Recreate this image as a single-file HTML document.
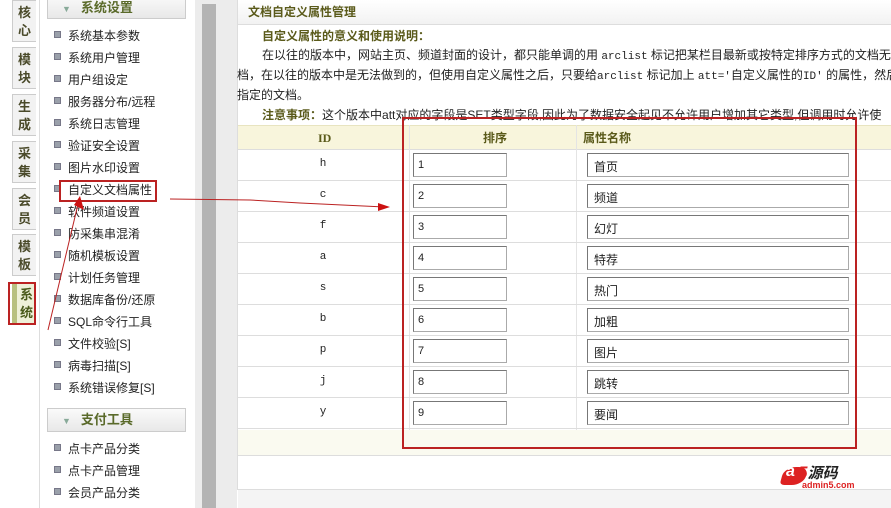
<!DOCTYPE html>
<html><head><meta charset="utf-8"><style>
*{margin:0;padding:0;box-sizing:border-box}
body{width:891px;height:508px;overflow:hidden;background:#fff;font-family:"Liberation Sans","Noto Sans CJK SC",sans-serif;font-size:12px;color:#222;position:relative}
.a{position:absolute}
.tab{position:absolute;left:12px;width:24px;height:42px;background:#f2f2f2;border:1px solid #ccc;border-right:none;color:#4a4a2a;font-weight:bold;font-size:13px;line-height:18px;text-align:center;padding-top:3px}
.it{position:absolute;left:54px;font-size:12px;color:#222;line-height:16px}
.it:before{content:"";display:inline-block;width:5px;height:5px;background:#9aa0aa;border:1px solid #778;margin-right:7px;vertical-align:2px}
.hd{position:absolute;left:47px;width:139px;height:24px;background:linear-gradient(#fafafa,#e8e8e8);border:1px solid #ccc;color:#5a6a2a;font-weight:bold;font-size:13px;line-height:22px;padding-left:14px}
.hd span{color:#8a9;font-size:9px;margin-right:10px}
.row{position:absolute;left:238px;width:653px;height:31px;border-bottom:1px solid #ddd}
.id{position:absolute;left:70px;width:30px;text-align:center;top:8px;font-family:"Liberation Mono",monospace;font-size:11px}
.in1{position:absolute;left:175px;top:3px;width:94px;height:24px;border:1px solid #aaa;border-top-color:#777;border-left-color:#777;padding:5px 4px;font-size:11px}
.in2{position:absolute;left:349px;top:3px;width:262px;height:24px;border:1px solid #aaa;border-top-color:#777;border-left-color:#777;padding:4px 6px;font-size:12px}
p.t{position:absolute;left:237px;font-size:12px;white-space:nowrap}
</style></head><body>
<div class="a" style="left:0;top:0;width:40px;height:508px;background:#fff;border-right:1px solid #ddd"></div>
<div class="tab" style="top:0">核<br>心</div>
<div class="tab" style="top:47px">模<br>块</div>
<div class="tab" style="top:94px">生<br>成</div>
<div class="tab" style="top:141px">采<br>集</div>
<div class="tab" style="top:188px">会<br>员</div>
<div class="tab" style="top:234px">模<br>板</div>
<div class="tab" style="top:282px;background:#eef0d8;border-left:5px solid #b8c080;color:#4a5a1a">系<br>统</div>
<div class="a" style="left:8px;top:282px;width:28px;height:43px;border:2px solid #b22"></div>
<div class="a" style="left:195px;top:0;width:42px;height:508px;background:#ececec"></div>
<div class="a" style="left:202px;top:4px;width:14px;height:504px;background:#b4b4b4"></div>
<div class="hd" style="top:-5px;height:24px;line-height:22px;padding-top:1px"><span>▼</span>系统设置</div>
<div class="it" style="top:28px">系统基本参数</div>
<div class="it" style="top:50px">系统用户管理</div>
<div class="it" style="top:72px">用户组设定</div>
<div class="it" style="top:94px">服务器分布/远程</div>
<div class="it" style="top:116px">系统日志管理</div>
<div class="it" style="top:138px">验证安全设置</div>
<div class="it" style="top:160px">图片水印设置</div>
<div class="it" style="top:182px">自定义文档属性</div>
<div class="a" style="left:59px;top:180px;width:98px;height:22px;border:2px solid #b22"></div>
<div class="it" style="top:204px">软件频道设置</div>
<div class="it" style="top:226px">防采集串混淆</div>
<div class="it" style="top:248px">随机模板设置</div>
<div class="it" style="top:270px">计划任务管理</div>
<div class="it" style="top:292px">数据库备份/还原</div>
<div class="it" style="top:314px">SQL命令行工具</div>
<div class="it" style="top:336px">文件校验[S]</div>
<div class="it" style="top:358px">病毒扫描[S]</div>
<div class="it" style="top:380px">系统错误修复[S]</div>
<div class="hd" style="top:408px"><span>▼</span>支付工具</div>
<div class="it" style="top:441px">点卡产品分类</div>
<div class="it" style="top:463px">点卡产品管理</div>
<div class="it" style="top:485px">会员产品分类</div>

<div class="a" style="left:237px;top:0;width:654px;height:25px;background:linear-gradient(#fff,#f2f2f2);border-bottom:1px solid #ddd;border-left:1px solid #ddd"></div>
<div class="a" style="left:237px;top:25px;width:1px;height:465px;background:#ddd"></div>
<div class="a" style="left:248px;top:3px;font-weight:bold;color:#5a5a1a;font-size:12px">文档自定义属性管理</div>
<p class="t" style="left:262px;top:27px;font-weight:bold;color:#5a5a1a">自定义属性的意义和使用说明：</p>
<p class="t" style="left:262px;top:46px">在以往的版本中，网站主页、频道封面的设计，都只能单调的用 <span style="font-family:'Liberation Mono';font-size:11px">arclist</span> 标记把某栏目最新或按特定排序方式的文档无</p>
<p class="t" style="top:66px">档，在以往的版本中是无法做到的，但使用自定义属性之后，只要给<span style="font-family:'Liberation Mono';font-size:11px">arclist</span> 标记加上 <span style="font-family:'Liberation Mono';font-size:11px">att='</span>自定义属性的<span style="font-family:'Liberation Mono';font-size:11px">ID'</span> 的属性，然后</p>
<p class="t" style="top:86px">指定的文档。</p>
<p class="t" style="left:262px;top:106px"><b style="color:#5a5a1a">注意事项：</b>这个版本中att对应的字段是SET类型字段,因此为了数据安全起见不允许用户增加其它类型,但调用时允许使</p>
<div class="a" style="left:238px;top:125px;width:653px;height:25px;background:#f8f5dc;border-bottom:1px solid #ddd;border-top:1px solid #e8e4c0"></div>
<div class="a" style="left:318px;top:131px;font-weight:bold;color:#5a5a1a;font-family:'Liberation Serif';font-size:12px">ID</div>
<div class="a" style="left:483px;top:129px;font-weight:bold;color:#5a5a1a">排序</div>
<div class="a" style="left:583px;top:129px;font-weight:bold;color:#5a5a1a">属性名称</div>
<div class="a" style="left:409px;top:125px;width:1px;height:305px;background:#e4e4e4"></div>
<div class="a" style="left:576px;top:125px;width:1px;height:305px;background:#e4e4e4"></div>

<div class="row" style="top:150px"><div class="id">h</div><div class="in1">1</div><div class="in2">首页</div></div>
<div class="row" style="top:181px"><div class="id">c</div><div class="in1">2</div><div class="in2">频道</div></div>
<div class="row" style="top:212px"><div class="id">f</div><div class="in1">3</div><div class="in2">幻灯</div></div>
<div class="row" style="top:243px"><div class="id">a</div><div class="in1">4</div><div class="in2">特荐</div></div>
<div class="row" style="top:274px"><div class="id">s</div><div class="in1">5</div><div class="in2">热门</div></div>
<div class="row" style="top:305px"><div class="id">b</div><div class="in1">6</div><div class="in2">加粗</div></div>
<div class="row" style="top:336px"><div class="id">p</div><div class="in1">7</div><div class="in2">图片</div></div>
<div class="row" style="top:367px"><div class="id">j</div><div class="in1">8</div><div class="in2">跳转</div></div>
<div class="row" style="top:398px"><div class="id">y</div><div class="in1">9</div><div class="in2">要闻</div></div>
<div class="a" style="left:238px;top:430px;width:653px;height:26px;background:#fafaf0;border-bottom:1px solid #ddd"></div>
<div class="a" style="left:238px;top:489px;width:653px;height:19px;background:#f4f4f4;border-top:1px solid #ddd"></div>
<div class="a" style="left:402px;top:117px;width:455px;height:332px;border:2px solid #b22"></div>

<svg class="a" style="left:0;top:0" width="891" height="508">
<polyline points="170,199 250,200 300,203 385,207" fill="none" stroke="#b22" stroke-width="1"/>
<polygon points="378,203 390,207 378,211" fill="#c11"/>
<line x1="48" y1="330" x2="79" y2="200" stroke="#b22" stroke-width="1"/>
<polygon points="74,205 80,196 84,210" fill="#c11"/>
</svg>
<div class="a" style="left:782px;top:467px;width:24px;height:18px;background:#d22;border-radius:50% 40% 50% 20%;transform:skewX(-15deg)"></div>
<div class="a" style="left:786px;top:463px;font-weight:bold;font-style:italic;color:#fff;font-size:16px">a</div>
<div class="a" style="left:798px;top:462px;font-weight:bold;font-style:italic;color:#d22;font-size:17px">5<span style="color:#222;font-size:15px">源码</span></div>
<div class="a" style="left:802px;top:480px;font-weight:bold;color:#d22;font-size:9px">admin5.com</div>
</body></html>
